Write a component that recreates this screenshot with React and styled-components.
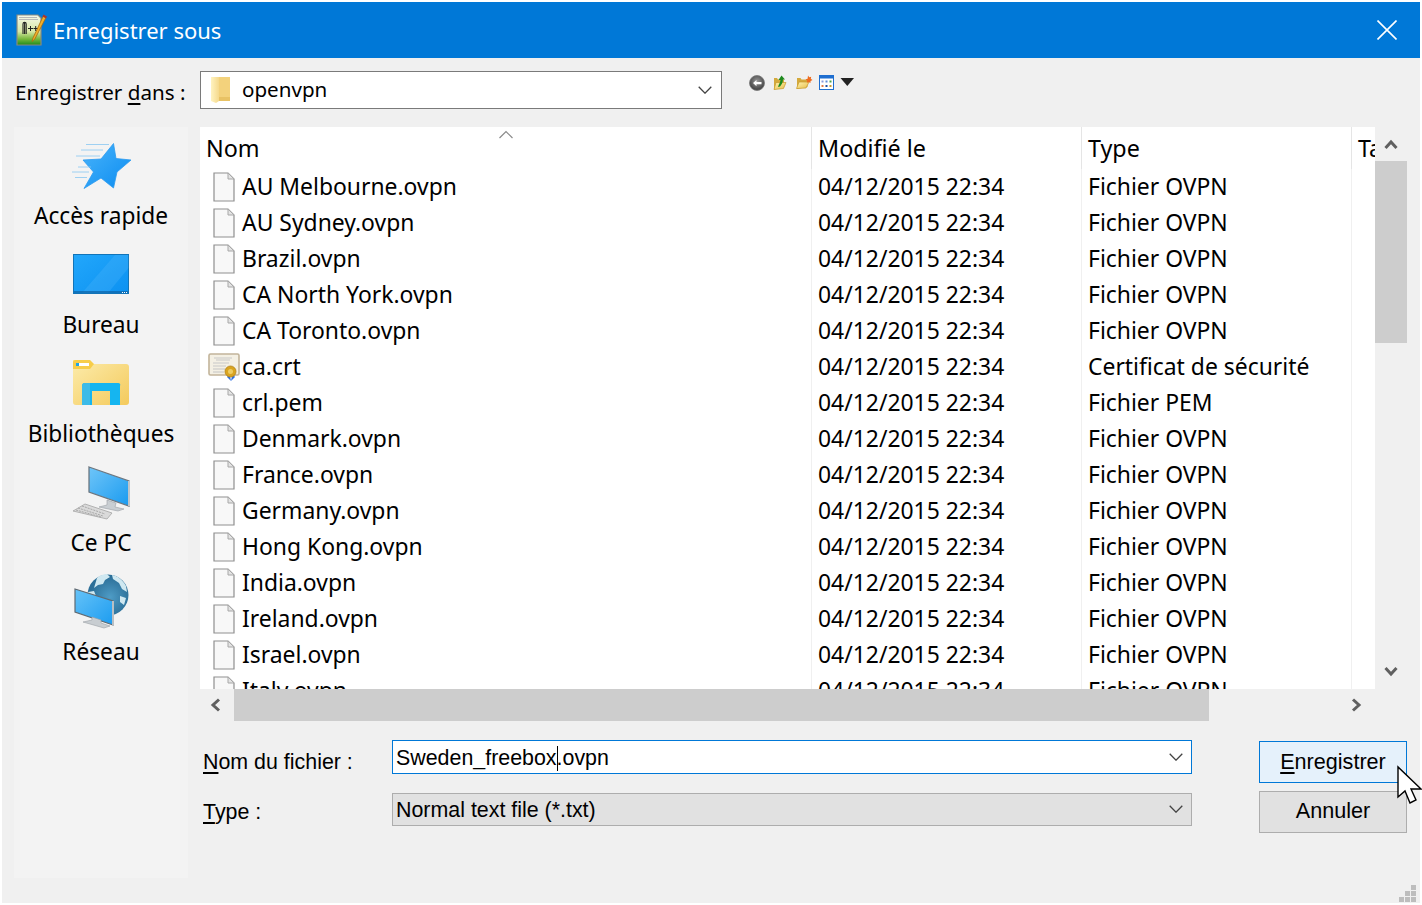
import React from "react";
import styled, { createGlobalStyle } from "styled-components";

const Global = createGlobalStyle`
  html, body { margin: 0; padding: 0; background: #fff; }
  html { width: 1422px; height: 905px; overflow: hidden; }
  body { padding: 2px; width: 1422px; height: 905px; }
  * { box-sizing: border-box; }
`;
const ui = `"Noto Sans", "Open Sans", sans-serif`;
const classic = `"Liberation Sans", Arial, sans-serif`;

const Win = styled.div`
  position: relative; width: 1418px; height: 901px; background: #f0f0f0;
  display: flex; flex-direction: column; font-family: ${ui}; color: #000;
`;
const TitleBar = styled.header`
  height: 56px; background: #0078d7; display: flex; align-items: center;
  padding: 0 23px 0 14px; color: #fff; flex: none;
`;
const TitleText = styled.h1`
  margin: 0 0 0 6px; font: 400 22px/1 ${ui}; flex: 1; padding-bottom: 1px;
`;
const Top = styled.div`
  height: 69px; flex: none; display: flex; align-items: flex-start; padding: 13px 0 0 13px;
`;
const LookLabel = styled.label`
  width: 185px; font-size: 20.6px; line-height: 42px; white-space: nowrap;
`;
const Combo = styled.div`
  width: 522px; height: 38px; background: #fff; border: 1.5px solid #7a7a7a;
  display: flex; align-items: center; padding: 0 9px 0 9px; font-size: 20.6px;
`;
const ComboText = styled.span` flex: 1; margin-left: 10px; padding-bottom: 3px; `;
const Tools = styled.div`
  display: flex; margin: 0 0 0 26px;
`;
const Main = styled.div`
  flex: 1; display: flex; gap: 12px; padding: 0 13px 25px 12px; min-height: 0;
`;
const Sidebar = styled.nav`
  width: 174px; background: #f3f3f3; flex: none;
`;
const Place = styled.div`
  height: 109px; display: flex; flex-direction: column; align-items: center;
`;
const PlaceIcon = styled.svg` width: 80px; height: 73px; display: block; flex: none; `;
const PlaceLabel = styled.span` font-size: 22.7px; line-height: 32px; white-space: nowrap; `;
const Right = styled.div` flex: 1; display: flex; flex-direction: column; min-width: 0; `;
const ListRow = styled.div` display: flex; height: 562px; flex: none; `;
const List = styled.div` width: 1175px; background: #fff; overflow: hidden; flex: none; `;
const Cols = "612px 270px 270px 23px";
const HeadRow = styled.div`
  display: grid; grid-template-columns: ${Cols}; height: 42px; position: relative;
`;
const HeadCell = styled.div`
  font-size: 23.300px; line-height: 43px; padding-left: ${(p) => p.$pad || 6}px;
  border-right: ${(p) => (p.$last ? "none" : "1px solid #e5e5e5")}; overflow: hidden; white-space: nowrap;
`;
const SortMark = styled.svg`
  position: absolute; left: 298px; top: 3px; width: 16px; height: 9px;
`;
const Row = styled.div`
  display: grid; grid-template-columns: ${Cols}; height: 36px; font-size: 22.900px; line-height: 36px;
`;
const NameCell = styled.div`
  display: flex; align-items: center; padding-left: 8px; border-right: 1px solid #f0f0f0; white-space: nowrap;
`;
const IconSlot = styled.span`
  width: 32px; height: 36px; margin-right: 2px; display: flex; align-items: center; justify-content: center; flex: none;
`;
const Cell = styled.div`
  padding-left: 6px; white-space: nowrap; border-right: ${(p) => (p.$last ? "none" : "1px solid #f0f0f0")};
`;
const VScroll = styled.div` width: 32px; display: flex; flex-direction: column; flex: none; `;
const ScrollBtn = styled.div`
  flex: none; display: flex; align-items: center; justify-content: center;
  ${(p) => (p.$v ? `height: 34px;` : `width: 34px;`)}
`;
const VThumb = styled.div` height: 182px; background: #cdcdcd; flex: none; `;
const Spacer = styled.div` flex: 1; `;
const HScroll = styled.div` width: 1175px; height: 32px; display: flex; flex: none; `;
const HThumb = styled.div` width: 975px; background: #cdcdcd; flex: none; `;
const Form = styled.div` display: flex; padding: 19px 0 0 3px; `;
const Fields = styled.div` width: 989px; flex: none; `;
const Field = styled.div`
  display: flex; align-items: center; height: 34px; margin-bottom: 18px;
`;
const FieldLabel = styled.label`
  width: 189px; font: 400 21.400px/1 ${classic}; padding-top: ${(p) => p.$top}px; flex: none;
`;
const Mn = styled.span` text-decoration: underline; text-underline-offset: 3px; text-decoration-thickness: 1.5px; `;
const Input = styled.div`
  width: 800px; height: ${(p) => p.$h}px; display: flex; align-items: center; padding: 0 8px 0 3px;
  font: 400 21.400px/1 ${classic};
  background: ${(p) => (p.$select ? "#e1e1e1" : "#fff")};
  border: 1.5px solid ${(p) => (p.$select ? "#adadad" : "#0078d7")};
`;
const InputText = styled.span`
  flex: 1; white-space: nowrap; padding-top: ${(p) => (p.$select ? 3 : 2)}px;
`;
const Caret = styled.span`
  display: inline-block; width: 1px; height: 25px; background: #000; vertical-align: -6px; margin: 0 -1px 0 0;
`;
const Buttons = styled.div` margin-left: 67px; display: flex; flex-direction: column; gap: 8px; padding-top: 1px; `;
const Btn = styled.button`
  width: 148px; height: 42px; padding: 0 0 ${(p) => (p.$primary ? 1 : 3)}px; font: 400 21.600px/1 ${classic}; color: #000;
  background: ${(p) => (p.$primary ? "#e5f1fb" : "#e1e1e1")};
  border: 1.5px solid ${(p) => (p.$primary ? "#0078d7" : "#adadad")};
`;
const Cursor = styled.svg` position: absolute; left: 1392px; top: 762px; width: 28px; height: 42px; overflow: visible; `;
const Grip = styled.svg` position: absolute; left: 1397px; top: 882px; width: 18px; height: 18px; `;

const NppIcon = () => (
  <svg width="31" height="34" viewBox="0 0 31 34">
    <defs><linearGradient id="npg" x1="0" y1="0" x2="0" y2="1"><stop offset="0" stopColor="#f6f8ea" /><stop offset=".55" stopColor="#d7e7a5" /><stop offset=".8" stopColor="#77b83c" /><stop offset="1" stopColor="#1f8a1c" /></linearGradient></defs>
    <path d="M1 2h21l3 3v27H1z" fill="url(#npg)" stroke="#8a8a80" strokeWidth="1.200" />
    <path d="M3 4.500h18M3 6.500h19" stroke="#b8b8b8" strokeWidth="1" />
    <path d="M7 21V11a1.600 1.600 0 0 1 3.200 0v10M8.600 9v12" fill="none" stroke="#222" strokeWidth="1.100" />
    <path d="M12 15.500h5M14.500 13v5M17.500 15.500h4.500M19.700 13v5" stroke="#222" strokeWidth="1" />
    <path d="M27.500 2.500 17 25l-1 3.500 2.800-2.400L30 4.500z" fill="#f1b02a" stroke="#a66a10" strokeWidth=".8" />
    <path d="M27.500 1.500 31 3.500l-1 2-3.500-2z" fill="#a6352e" />
  </svg>
);
const Close = () => (
  <svg width="20" height="20" viewBox="0 0 20 20"><path d="M.5.5l19 19M19.500.5l-19 19" stroke="#fff" strokeWidth="1.600" /></svg>
);
const FolderSmall = () => (
  <svg width="22" height="30" viewBox="0 0 22 30">
    <defs><linearGradient id="fs" x1="0" y1="0" x2="1" y2="0"><stop offset="0" stopColor="#fff3c0" /><stop offset="1" stopColor="#f5d98c" /></linearGradient></defs>
    <path d="M8 2h12v24H8z" fill="#f3d27c" />
    <path d="M9 22h11v4H9z" fill="#e8c264" />
    <path d="M1 2h8v24l-3 2-5-2z" fill="url(#fs)" />
  </svg>
);
const Chevron = ({ size = 14, color = "#444" }) => (
  <svg width={size} height={size * 0.6} viewBox="0 0 14 8.400"><path d="M.7.700 7 7.200 13.300.700" fill="none" stroke={color} strokeWidth="1.300" /></svg>
);
const ToolIcons = () => (
  <svg width="110" height="24" viewBox="748 71 110 24">
    <defs>
      <radialGradient id="bk" cx=".5" cy=".4"><stop offset="0" stopColor="#9a9a9a" /><stop offset="1" stopColor="#4c4c4c" /></radialGradient>
      <linearGradient id="ff" x1="0" y1="0" x2="1" y2="1"><stop offset="0" stopColor="#fff3b0" /><stop offset="1" stopColor="#e7bd48" /></linearGradient>
    </defs>
    <circle cx="757" cy="83" r="7.500" fill="url(#bk)" stroke="#777" strokeWidth=".8" />
    <path d="M753 83l3.500-3v2h5v2.200h-5v2z" fill="#fff" />
    <path d="M774 78h3l1 1.500h6v8l-10 2z" fill="#d4a93c" />
    <path d="M774 89.500l2-7h10l-2.500 6z" fill="url(#ff)" stroke="#c59a2b" strokeWidth=".7" />
    <path d="M778 87c1-3 2-4 2.500-7h-2l3-4.500 3.500 4h-2c0 3-1.500 5-3 7z" fill="#1e8a1e" />
    <path d="M797 78h3.500l1 1.500h6v7.500l-10.500 2z" fill="#d4a93c" />
    <path d="M796.500 88.500l2.500-6.500h10l-3 6z" fill="url(#ff)" stroke="#c59a2b" strokeWidth=".7" />
    <path d="M808 75.500l1.200 1.800 2-.5-.4 2 1.700 1.200-1.900 1-.2 2-1.700-1.100-1.800.8.200-2-1.500-1.400 2-.5z" fill="#ee6b1f" />
    <rect x="819.500" y="75.500" width="14" height="14" fill="#fff" stroke="#1f6fd0" />
    <rect x="819.500" y="75.500" width="14" height="3" fill="#1f6fd0" />
    <path d="M821.500 80.500h2v2h-2z" fill="#8a9bd8" /><path d="M825.500 80.500h2v2h-2z" fill="#5b8ad8" /><path d="M829.500 80.500h2v2h-2z" fill="#4aa54a" />
    <path d="M821.500 85h2v2h-2z" fill="#e07a45" /><path d="M825.500 85h2v2h-2z" fill="#1f4f9f" /><path d="M829.500 85h2v2h-2z" fill="#c89a2a" />
    <path d="M840.500 78h13.500l-6.700 8z" fill="#222" />
  </svg>
);
const FileIcon = () => (
  <svg width="22" height="30" viewBox="0 0 22 30">
    <path d="M1 1h14l6 6v22H1z" fill="#f8f8f8" stroke="#8f8f8f" strokeWidth="1.200" />
    <path d="M15 1v6h6z" fill="#e4e4e4" stroke="#a8a8a8" strokeWidth="1" />
  </svg>
);
const CertIcon = () => (
  <svg width="32" height="30" viewBox="0 0 32 30">
    <rect x="1" y="2" width="30" height="21" rx="1.500" fill="#f4f0e4" stroke="#c2b49a" strokeWidth="1.600" />
    <path d="M6 6h18M8 8h14M5 11h16M5 14h13" stroke="#c8c8c8" strokeWidth="1" />
    <path d="M5 17h12M5 20h11" stroke="#c4c4c4" strokeWidth="1" />
    <path d="M19 25l3-4 2 3-1 5zM27 25l-3-4-2 3 1 5z" fill="#2d6fe0" />
    <circle cx="22.500" cy="19.500" r="5.500" fill="#d9a420" stroke="#b3811a" strokeWidth=".8" />
    <circle cx="22.500" cy="19.500" r="2.500" fill="#efcd62" />
  </svg>
);
const Arrow = ({ d }) => {
  const paths = { u: "M1.500 11 7 5l5.500 6", d: "M1.500 3 7 9l5.500-6", l: "M9 1.500 3 7l6 5.500", r: "M2 1.500 8 7l-6 5.500" };
  return <svg width="14" height="14" viewBox="0 0 14 14"><path d={paths[d]} fill="none" stroke="#606060" strokeWidth="3" /></svg>;
};

const Star = () => (
  <PlaceIcon viewBox="61 127 80 73">
    <defs><linearGradient id="st" x1="0" y1="0" x2="1" y2="1"><stop offset="0" stopColor="#49b4fb" /><stop offset="1" stopColor="#0b8cf0" /></linearGradient></defs>
    <path d="M113.500 143.500 116 158.500 131 160 117 172 113.500 188 101 178 84 188.500 93.500 172 83 160 101 159z" fill="url(#st)" stroke="#2b9af0" strokeWidth=".8" strokeLinejoin="round" />
    <path d="M86 144.500h23M81 150h22M76 156h24M78 167h13M72 172h17M75 177.500h12" stroke="#8ac8f2" strokeWidth="1" opacity=".8" />
  </PlaceIcon>
);
const Desktop = () => (
  <PlaceIcon viewBox="61 236 80 73">
    <defs><linearGradient id="dk" x1="0" y1="0" x2="1" y2="1"><stop offset="0" stopColor="#22a7fb" /><stop offset="1" stopColor="#0c91f1" /></linearGradient></defs>
    <rect x="73.500" y="254.500" width="55" height="39" fill="url(#dk)" stroke="#1274b8" />
    <path d="M82 293 115 255h13.500v13L108 293z" fill="#5bbcfb" opacity=".25" />
    <path d="M74 292h54" stroke="#0f66a8" strokeWidth="1.500" />
    <path d="M122 292.500h5" stroke="#fff" strokeWidth="1" strokeDasharray="1 1" />
  </PlaceIcon>
);
const Lib = () => (
  <PlaceIcon viewBox="61 345 80 73">
    <defs><linearGradient id="lb" x1="0" y1="0" x2="1" y2="1"><stop offset="0" stopColor="#fcecac" /><stop offset="1" stopColor="#f4ca5c" /></linearGradient></defs>
    <path d="M73 360h15l5 4-1 0h34a3 3 0 0 1 3 3v35a3 3 0 0 1-3 3H76a3 3 0 0 1-3-3z" fill="url(#lb)" />
    <path d="M73 362a2 2 0 0 1 2-2h15l4 4-4 5H73z" fill="#f7cd4a" />
    <rect x="76" y="363" width="13" height="3" fill="#fff" /><rect x="76" y="363" width="3" height="3" fill="#20a4e8" />
    <path d="M82 405v-19a3 3 0 0 1 2-3h34a2 2 0 0 1 2 3v19h-10v-14H92v14z" fill="#15b5f0" />
    <path d="M82 405v-19a3 3 0 0 1 2-3h6v22z" fill="#3dbbe8" />
  </PlaceIcon>
);
const Pc = () => (
  <PlaceIcon viewBox="61 454 80 73">
    <defs><linearGradient id="pc" x1="0" y1="0" x2="1" y2="1"><stop offset="0" stopColor="#6fc5f8" /><stop offset="1" stopColor="#1a9bf0" /></linearGradient></defs>
    <path d="M89 467 129 481v25l-40-14z" fill="url(#pc)" stroke="#6d7780" strokeWidth="1.300" />
    <path d="M129 481v25" stroke="#bfc5ca" strokeWidth="2" />
    <path d="M107 500l9 3-1 4 9 2-6 2-19-4 8-2z" fill="#c9ced2" stroke="#9aa0a5" strokeWidth=".6" />
    <path d="M85 504l27 9-5 6-34-8z" fill="#dadada" stroke="#a5a5a5" strokeWidth=".8" />
    <path d="M82 506l23 8M78 508l25 8M76 510l25 7" stroke="#a8a8a8" strokeWidth="1" strokeDasharray="2 1" />
  </PlaceIcon>
);
const Net = () => (
  <PlaceIcon viewBox="61 563 80 73">
    <defs>
      <radialGradient id="gl" cx=".55" cy=".55"><stop offset="0" stopColor="#4e9cc6" /><stop offset="1" stopColor="#2c6f98" /></radialGradient>
      <linearGradient id="ns" x1="0" y1="0" x2="1" y2="1"><stop offset="0" stopColor="#66c3f8" /><stop offset="1" stopColor="#1c9cf0" /></linearGradient>
    </defs>
    <circle cx="108" cy="595" r="20.500" fill="url(#gl)" />
    <path d="M97 578c3-3 7-4 10-4l3 3-5 3-2 4-5 1-4 3zM112 575c6 1 11 5 14 11l1 6-5-3-3-6-6-4zM88 592l6-1 2 5-7 1zM120 596l6 2-2 7-4-3z" fill="#cfe8f1" />
    <path d="M75 589l38 12v24l-38-13z" fill="url(#ns)" stroke="#5f6a72" strokeWidth="1.200" />
    <path d="M113 601v24" stroke="#b9bfc4" strokeWidth="2" />
    <path d="M92 617l9 3v3l9 3-6 2-21-6 9-2z" fill="#c8cdd1" stroke="#9aa0a5" strokeWidth=".6" />
  </PlaceIcon>
);

const files = [
  ["AU Melbourne.ovpn"], ["AU Sydney.ovpn"], ["Brazil.ovpn"], ["CA North York.ovpn"], ["CA Toronto.ovpn"],
  ["ca.crt", "Certificat de sécurité", true], ["crl.pem", "Fichier PEM"], ["Denmark.ovpn"], ["France.ovpn"],
  ["Germany.ovpn"], ["Hong Kong.ovpn"], ["India.ovpn"], ["Ireland.ovpn"], ["Israel.ovpn"], ["Italy.ovpn"],
];
const places = [[Star, "Accès rapide"], [Desktop, "Bureau"], [Lib, "Bibliothèques"], [Pc, "Ce PC"], [Net, "Réseau"]];

export default function App() {
  return (
    <>
      <Global />
      <Win>
        <TitleBar><NppIcon /><TitleText>Enregistrer sous</TitleText><Close /></TitleBar>
        <Top>
          <LookLabel>Enregistrer <Mn>d</Mn>ans :</LookLabel>
          <Combo><FolderSmall /><ComboText>openvpn</ComboText><Chevron /></Combo>
          <Tools><ToolIcons /></Tools>
        </Top>
        <Main>
          <Sidebar>
            {places.map(([I, t]) => (
              <Place key={t}><I /><PlaceLabel>{t}</PlaceLabel></Place>
            ))}
          </Sidebar>
          <Right>
            <ListRow>
              <List>
                <HeadRow>
                  <HeadCell>Nom</HeadCell>
                  <HeadCell>Modifié le</HeadCell>
                  <HeadCell>Type</HeadCell>
                  <HeadCell $last>Taille</HeadCell>
                  <SortMark viewBox="0 0 16 9"><path d="M1.500 8 8 1.500 14.500 8" fill="none" stroke="#8a8a8a" strokeWidth="1.200" /></SortMark>
                </HeadRow>
                {files.map(([name, type, cert]) => (
                  <Row key={name}>
                    <NameCell><IconSlot>{cert ? <CertIcon /> : <FileIcon />}</IconSlot>{name}</NameCell>
                    <Cell>04/12/2015 22:34</Cell>
                    <Cell>{type || "Fichier OVPN"}</Cell>
                    <Cell $last />
                  </Row>
                ))}
              </List>
              <VScroll>
                <ScrollBtn $v><Arrow d="u" /></ScrollBtn>
                <VThumb />
                <Spacer />
                <ScrollBtn $v><Arrow d="d" /></ScrollBtn>
              </VScroll>
            </ListRow>
            <HScroll>
              <ScrollBtn><Arrow d="l" /></ScrollBtn>
              <HThumb />
              <Spacer />
              <ScrollBtn><Arrow d="r" /></ScrollBtn>
            </HScroll>
            <Form>
              <Fields>
                <Field>
                  <FieldLabel $top={12}><Mn>N</Mn>om du fichier :</FieldLabel>
                  <Input $h={34}><InputText>Sweden_freebox<Caret />.ovpn</InputText><Chevron /></Input>
                </Field>
                <Field>
                  <FieldLabel $top={8}><Mn>T</Mn>ype :</FieldLabel>
                  <Input $h={33} $select><InputText $select>Normal text file (*.txt)</InputText><Chevron /></Input>
                </Field>
              </Fields>
              <Buttons>
                <Btn $primary><Mn>E</Mn>nregistrer</Btn>
                <Btn>Annuler</Btn>
              </Buttons>
            </Form>
          </Right>
        </Main>
        <Cursor viewBox="0 0 28 42"><path d="M4 3v30l7-6 5 12 6-3-5-11h10z" fill="#fff" stroke="#000" strokeWidth="1.400" strokeLinejoin="miter" /></Cursor>
        <Grip viewBox="0 0 18 18" fill="#bdbdbd">
          <rect x="12" y="1" width="5" height="5" /><rect x="6" y="7" width="5" height="5" /><rect x="12" y="7" width="5" height="5" />
          <rect x="0" y="13" width="5" height="5" /><rect x="6" y="13" width="5" height="5" /><rect x="12" y="13" width="5" height="5" />
        </Grip>
      </Win>
    </>
  );
}
